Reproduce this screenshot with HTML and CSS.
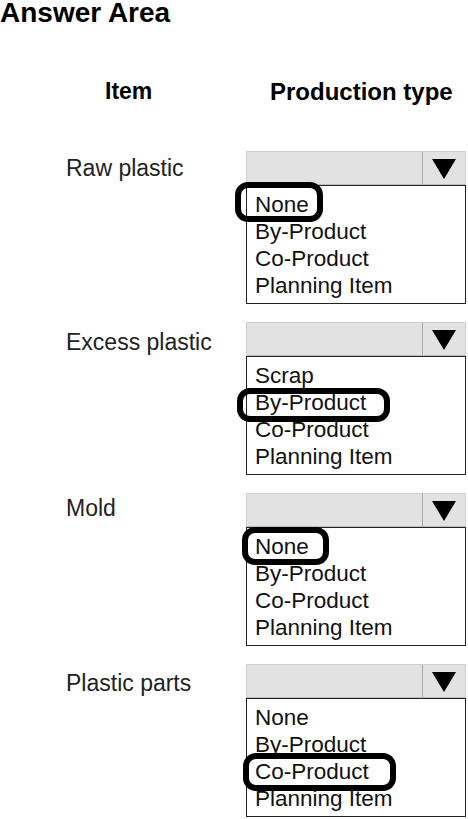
FILE: index.html
```html
<!DOCTYPE html>
<html>
<head>
<meta charset="utf-8">
<link rel="stylesheet" href="styles.css">
</head>
<body>
<div class="page">
  <h1 class="title">Answer Area</h1>
  <div class="grid heads">
    <div class="head head-item">Item</div>
    <div class="head head-type">Production type</div>
  </div>

  <div class="rows">
    <div class="grid row">
      <div class="label">Raw plastic</div>
      <div class="dd">
        <div class="dd-head"><span class="dd-field"></span><span class="dd-btn"><svg width="24" height="20" viewBox="0 0 24 20"><polygon points="0,0 24,0 12,20" fill="#000"/></svg></span></div>
        <div class="dd-list">
          <div class="opt"><span class="txt sel r1">None</span></div>
          <div class="opt"><span class="txt">By-Product</span></div>
          <div class="opt"><span class="txt">Co-Product</span></div>
          <div class="opt"><span class="txt">Planning Item</span></div>
        </div>
      </div>
    </div>

    <div class="grid row">
      <div class="label l2">Excess plastic</div>
      <div class="dd">
        <div class="dd-head"><span class="dd-field"></span><span class="dd-btn"><svg width="24" height="20" viewBox="0 0 24 20"><polygon points="0,0 24,0 12,20" fill="#000"/></svg></span></div>
        <div class="dd-list">
          <div class="opt"><span class="txt">Scrap</span></div>
          <div class="opt"><span class="txt sel r2">By-Product</span></div>
          <div class="opt"><span class="txt">Co-Product</span></div>
          <div class="opt"><span class="txt">Planning Item</span></div>
        </div>
      </div>
    </div>

    <div class="grid row">
      <div class="label l3">Mold</div>
      <div class="dd">
        <div class="dd-head"><span class="dd-field"></span><span class="dd-btn"><svg width="24" height="20" viewBox="0 0 24 20"><polygon points="0,0 24,0 12,20" fill="#000"/></svg></span></div>
        <div class="dd-list">
          <div class="opt"><span class="txt sel r3">None</span></div>
          <div class="opt"><span class="txt">By-Product</span></div>
          <div class="opt"><span class="txt">Co-Product</span></div>
          <div class="opt"><span class="txt">Planning Item</span></div>
        </div>
      </div>
    </div>

    <div class="grid row">
      <div class="label l4">Plastic parts</div>
      <div class="dd">
        <div class="dd-head"><span class="dd-field"></span><span class="dd-btn"><svg width="24" height="20" viewBox="0 0 24 20"><polygon points="0,0 24,0 12,20" fill="#000"/></svg></span></div>
        <div class="dd-list">
          <div class="opt"><span class="txt">None</span></div>
          <div class="opt"><span class="txt">By-Product</span></div>
          <div class="opt"><span class="txt sel r4">Co-Product</span></div>
          <div class="opt"><span class="txt">Planning Item</span></div>
        </div>
      </div>
    </div>
  </div>
</div>
</body>
</html>
```

FILE: styles.css
```css
html, body {
  margin: 0;
  padding: 0;
  background: #fff;
}
body {
  font-family: "Liberation Sans", Arial, sans-serif;
  color: #111;
  width: 468px;
  height: 819px;
  overflow: hidden;
}
.page {
  display: flex;
  flex-direction: column;
}
.title {
  margin: 0;
  font-size: 28px;
  line-height: 26px;
  font-weight: bold;
  color: #000;
}
.grid {
  display: grid;
  grid-template-columns: 180px 220px;
  padding-left: 66px;
}
.heads {
  margin-top: 52px;
}
.head {
  font-size: 23px;
  line-height: 27px;
  font-weight: bold;
  color: #000;
}
.head-item {
  padding-left: 39px;
}
.head-type {
  padding-left: 24px;
  font-size: 24px;
}
.rows {
  margin-top: 46px;
  display: flex;
  flex-direction: column;
  gap: 18px;
}
.label {
  font-size: 23px;
  line-height: 27px;
  color: #222;
  padding-top: 4px;
}
.l2 { padding-top: 7px; }
.l3 { padding-top: 2px; }
.l4 { padding-top: 6px; }
.dd {
  display: flex;
  flex-direction: column;
}
.dd-head {
  height: 34px;
  box-sizing: border-box;
  display: flex;
  background: #e2e2e2;
  border: 1px solid #cfcfcf;
  border-bottom-color: #bdbdbd;
}
.dd-field {
  flex: 1;
  border-right: 1px solid #a8a8a8;
}
.dd-btn {
  width: 42px;
  display: flex;
  align-items: center;
  justify-content: center;
  padding-top: 2px;
}
.dd-list {
  border: 1px solid #222;
  background: #fff;
  padding: 5px 0 4px 8px;
}
.opt {
  font-size: 22.5px;
  line-height: 27px;
  color: #111;
}
.txt {
  display: inline-block;
  position: relative;
}
.sel::after {
  content: "";
  position: absolute;
  box-sizing: border-box;
  border: 6px solid #000;
  border-radius: 13px;
  z-index: 2;
}
.r1::after { top: -9px; bottom: -4px; left: -20px; right: -14px; }
.r2::after { top: -1px; bottom: -6px; left: -18px; right: -24px; }
.r3::after { top: -6px; bottom: -5px; left: -13px; right: -20px; }
.r4::after { top: -5px; bottom: -6px; left: -12px; right: -27px; }
```
